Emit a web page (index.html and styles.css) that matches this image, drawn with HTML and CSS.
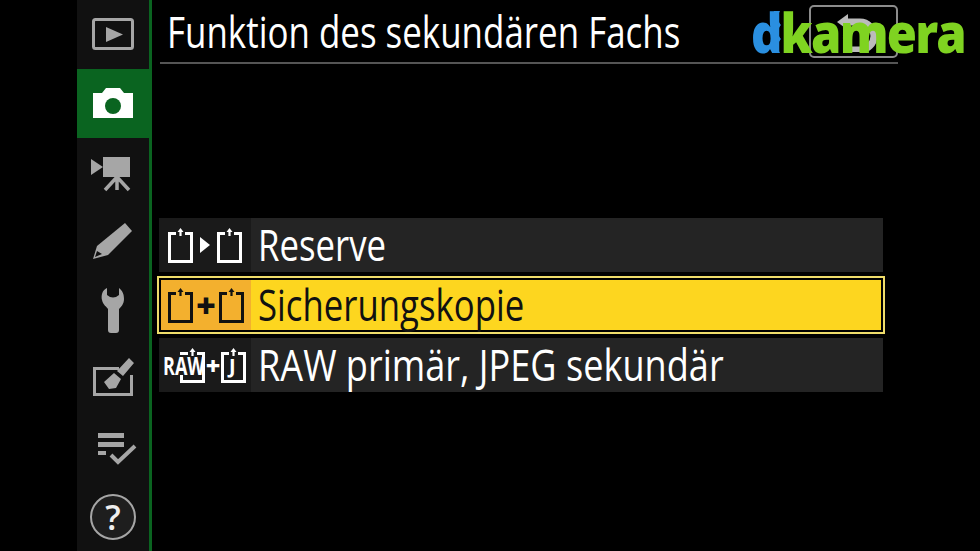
FILE: index.html
```html
<!DOCTYPE html>
<html lang="de">
<head>
    <meta charset="UTF-8">
    <title>Funktion des sekundären Fachs</title>
    <link rel="stylesheet" href="styles.css">
</head>
<body>
    <div class="screen">
        <nav class="sidebar">
            <div class="tab">
                <svg class="icon" viewBox="0 0 48 48"><rect x="4.5" y="9.5" width="39" height="29" rx="2" fill="none" stroke="#a6a6a6" stroke-width="3"/><path d="M17 17 L34 24.5 L17 32 Z" fill="#a6a6a6"/></svg>
            </div>
            <div class="tab active">
                <svg class="icon" viewBox="0 0 48 48"><path d="M4 14 H13 L17 9 H31 L35 14 H44 V39 H4 Z" fill="#fff"/><circle cx="24" cy="27" r="8" fill="#0a6420"/></svg>
            </div>
            <div class="tab">
                <svg class="icon" viewBox="0 0 48 48"><path d="M2 11 L14 19 L2 27 Z" fill="#a6a6a6"/><rect x="14" y="9" width="27" height="20" fill="#a6a6a6"/><path d="M28 29 L16 42 M28 29 V42 M28 29 L40 42" stroke="#a6a6a6" stroke-width="3.5" fill="none"/></svg>
            </div>
            <div class="tab">
                <svg class="icon" viewBox="0 0 48 48"><path d="M4 42 L8 29 L36 6 L43 14 L19 38 Z" fill="#a6a6a6"/><path d="M6 40 L8 34 L13 37 Z" fill="#111"/></svg>
            </div>
            <div class="tab">
                <svg class="icon" viewBox="0 0 48 48"><path d="M18 2 C13 4 12 10 13 14 C14 19 18 21 19 23 L19 44 Q19 47 22 47 L27 47 Q30 47 30 44 L30 23 C32 21 35 18 35 13 C35 9 34 5 30 2 L30 9 Q24 14 18 9 Z" fill="#a6a6a6"/></svg>
            </div>
            <div class="tab">
                <svg class="icon" viewBox="0 0 48 48"><path d="M30 13.5 H5.5 V39.5 H42.5 V20" fill="none" stroke="#a6a6a6" stroke-width="3"/><path d="M40 3 L45 8 L34 21 L28 16 Z M25 18 L32 24 L27 33 L20 34 L15 27 Z" fill="#a6a6a6"/></svg>
            </div>
            <div class="tab">
                <svg class="icon" viewBox="0 0 48 48"><path d="M9 9 H35 V14 H9 Z M9 18 H35 V23 H9 Z M9 27 H17 V31 H9 Z" fill="#a6a6a6"/><path d="M22 31 L29 38 L46 22" fill="none" stroke="#a6a6a6" stroke-width="4"/></svg>
            </div>
            <div class="tab">
                <div class="help">?</div>
            </div>
        </nav>

        <main class="main">
            <header class="header">
                <h1 class="title">Funktion des sekundären Fachs</h1>
                <div class="back">
                    <svg width="48" height="40" viewBox="0 0 48 40"><path d="M7 10 L18 2 V18 Z" fill="#bbb"/><path d="M18 10 H30 A14 14 0 0 1 30 38 H20" fill="none" stroke="#bbb" stroke-width="7"/></svg>
                </div>
            </header>

            <div class="list">
                <div class="row">
                    <div class="row-icons">
                        <svg class="card" viewBox="0 0 25 36"><use href="#cardShape"/></svg>
                        <svg class="arrow" viewBox="0 0 10 16"><path d="M0 0 L10 8 L0 16 Z" fill="currentColor"/></svg>
                        <svg class="card" viewBox="0 0 25 36"><use href="#cardShape"/></svg>
                    </div>
                    <span class="row-text">Reserve</span>
                </div>
                <div class="row selected">
                    <div class="row-icons">
                        <svg class="card" viewBox="0 0 25 36"><use href="#cardShape"/></svg>
                        <span class="plus">+</span>
                        <svg class="card" viewBox="0 0 25 36"><use href="#cardShape"/></svg>
                    </div>
                    <span class="row-text">Sicherungskopie</span>
                </div>
                <div class="row">
                    <div class="row-icons row-icons-raw">
                        <span class="raw">RAW</span>
                        <svg class="card" viewBox="0 0 25 36"><use href="#cardShape"/></svg>
                        <span class="plus">+</span>
                        <span class="card-j">
                            <svg class="card" viewBox="0 0 25 36"><use href="#cardShape"/></svg>
                            <span class="j">J</span>
                        </span>
                    </div>
                    <span class="row-text row-text-wide">RAW primär, JPEG sekundär</span>
                </div>
            </div>
        </main>

        <div class="logo">
            <span class="logo-d">d</span><span class="logo-k">kamera</span>
            <svg class="logo-zig" viewBox="0 0 12 42"><path d="M0 0 H7 L3 7 L8 14 L3 21 L8 28 L3 35 L7 42 H0 Z" fill="#2a8fe0"/></svg>
        </div>
    </div>

    <svg class="defs" width="0" height="0">
        <defs>
            <g id="cardShape">
                <path d="M8 6.5 H1.5 V34.5 H23.5 V6.5 H17" fill="none" stroke="currentColor" stroke-width="3"/>
                <path d="M12.5 1 L15.5 5 H9.5 Z M11.4 5 H13.6 V9 H11.4 Z" fill="currentColor"/>
            </g>
        </defs>
    </svg>
</body>
</html>
```

FILE: styles.css
```css
body {
    margin: 0;
    background: #000;
    color: #fff;
    font-family: "Open Sans", "Noto Sans", sans-serif;
    overflow: hidden;
}
.screen {
    position: relative;
    display: flex;
    width: 980px;
    height: 551px;
    padding-left: 77px;
    box-sizing: border-box;
}
.sidebar {
    display: grid;
    grid-template-rows: repeat(8, 1fr);
    width: 75px;
    box-sizing: border-box;
    background: #111;
    border-right: 3px solid #0a6420;
}
.tab {
    display: flex;
    align-items: center;
    justify-content: center;
}
.tab.active {
    background: #0a6420;
    margin-right: -3px;
    padding-right: 3px;
}
.icon {
    width: 48px;
    height: 48px;
}
.help {
    width: 42px;
    height: 42px;
    border: 2px solid #a6a6a6;
    border-radius: 50%;
    background: #1e1e1e;
    color: #eee;
    font-size: 34px;
    font-weight: 600;
    line-height: 42px;
    text-align: center;
}
.main {
    padding-left: 7px;
}
.header {
    display: flex;
    justify-content: space-between;
    align-items: flex-start;
    width: 738px;
    height: 64px;
    margin-left: 1px;
    box-sizing: border-box;
    border-bottom: 2px solid #555;
}
.title {
    margin: 6px 0 0 7px;
    font-size: 43px;
    font-weight: 400;
    line-height: 52px;
    white-space: nowrap;
    transform: scaleX(0.812);
    transform-origin: left;
}
.back {
    display: flex;
    align-items: center;
    justify-content: center;
    width: 89px;
    height: 53px;
    margin-top: 5px;
    box-sizing: border-box;
    border: 2px solid #8c8c8c;
    border-radius: 5px;
}
.list {
    display: flex;
    flex-direction: column;
    gap: 6px;
    width: 724px;
    margin-top: 154px;
}
.row {
    display: flex;
    align-items: center;
    height: 54px;
    box-sizing: border-box;
    background: #242424;
}
.row-icons {
    display: flex;
    align-items: center;
    justify-content: center;
    gap: 7px;
    width: 92px;
    height: 100%;
    background: #1a1a1a;
    flex: none;
    color: #fff;
}
.row-text {
    margin-left: 7px;
    font-size: 43px;
    line-height: 54px;
    white-space: nowrap;
    transform: scaleX(0.808);
    transform-origin: left;
}
.row-text-wide {
    transform: scaleX(0.84);
}
.selected {
    background: #fdd61f;
    color: #111;
    border: 2px solid #000;
    box-shadow: 0 0 0 2px #eedc6a;
}
.selected .row-icons {
    background: #f3b02e;
    color: #111;
    width: 90px;
}
.card {
    width: 25px;
    height: 36px;
}
.arrow {
    width: 10px;
    height: 16px;
}
.plus {
    display: flex;
    justify-content: center;
    width: 12px;
    font-size: 34px;
    font-weight: 800;
    line-height: 34px;
}
.row-icons-raw {
    justify-content: flex-start;
    gap: 2px;
    padding-left: 4px;
    box-sizing: border-box;
}
.row-icons-raw .plus {
    font-size: 25px;
}
.raw {
    flex: none;
    width: 34px;
    margin-right: -19px;
    z-index: 1;
    background: #1a1a1a;
    font-size: 25px;
    font-weight: 700;
    line-height: 20px;
    transform: scaleX(0.72);
    transform-origin: left;
}
.card-j {
    position: relative;
    display: flex;
}
.j {
    position: absolute;
    left: 8px;
    top: 9px;
    font-size: 20px;
    font-weight: 700;
    line-height: 20px;
}
.logo {
    position: absolute;
    left: 751px;
    top: -3px;
    font-size: 54px;
    font-weight: 800;
    line-height: 70px;
    white-space: nowrap;
    letter-spacing: -2px;
    transform: scaleX(0.905);
    transform-origin: left;
}
.logo-d {
    color: #2a8fe0;
}
.logo-k {
    color: #7fd321;
}
.logo-zig {
    position: absolute;
    left: 25px;
    top: 14px;
    width: 12px;
    height: 42px;
}
.defs {
    position: absolute;
}
```
